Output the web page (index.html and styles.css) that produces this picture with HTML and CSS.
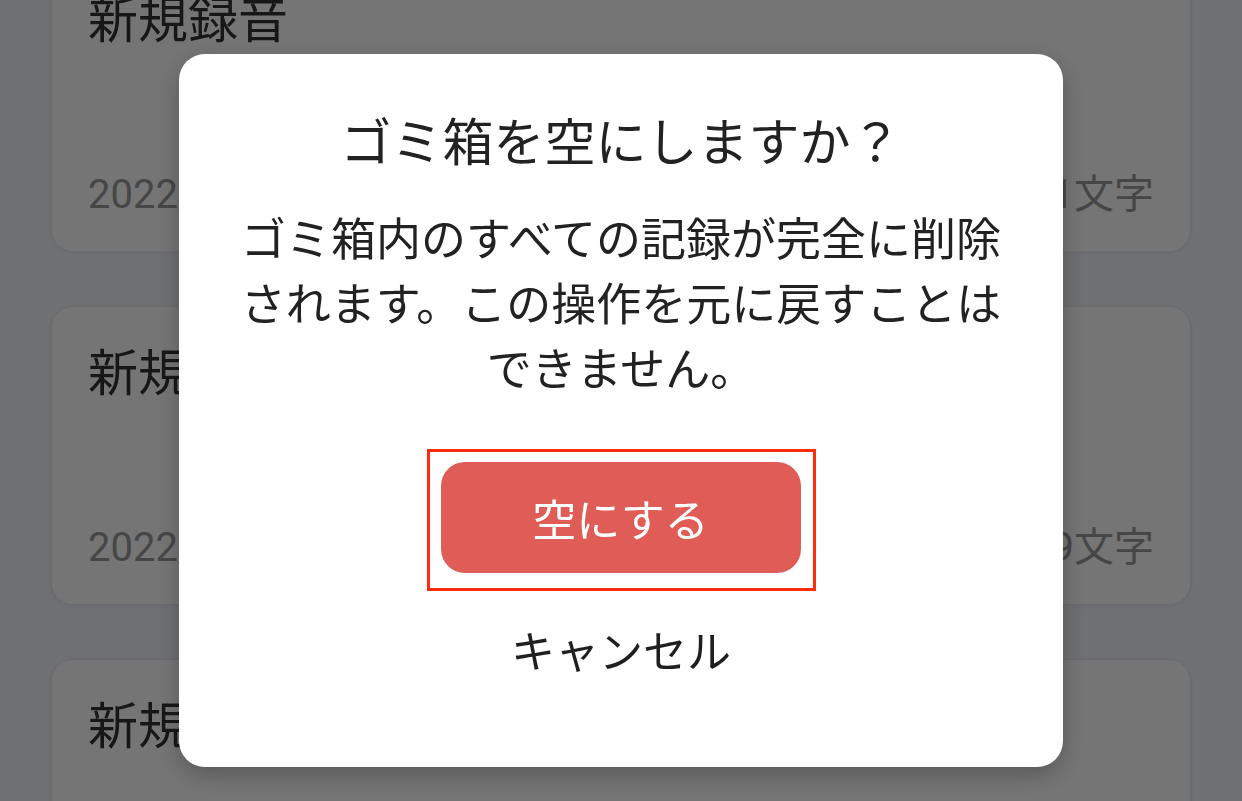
FILE: index.html
```html
<!DOCTYPE html>
<html lang="ja">
<head>
    <meta charset="UTF-8">
    <title>ゴミ箱</title>
    <meta name="viewport" content="width=device-width, initial-scale=1">
    <link rel="stylesheet" href="styles.css">
</head>
<body>
<div class="list">
    <div class="card">
        <div class="card-title">新規録音</div>
        <div class="card-meta"><span>2022/10/12 14:32</span><span>11文字</span></div>
    </div>
    <div class="card">
        <div class="card-title">新規録音</div>
        <div class="card-meta"><span>2022/10/11 09:15</span><span>29文字</span></div>
    </div>
    <div class="card">
        <div class="card-title">新規録音</div>
        <div class="card-meta"><span>2022/10/10 18:04</span><span>5文字</span></div>
    </div>
</div>

<div class="overlay">
    <div class="dialog">
        <h2 class="dialog-title">ゴミ箱を空にしますか？</h2>
        <p class="dialog-text">ゴミ箱内のすべての記録が完全に削除されます。この操作を元に戻すことはできません。</p>
        <div class="highlight">
            <button class="btn-danger">空にする</button>
        </div>
        <button class="btn-cancel">キャンセル</button>
    </div>
</div>
</body>
</html>
```

FILE: styles.css
```css
html, body { height: 801px; overflow: hidden; }
body { margin: 0; background: #f1f3f8; font-family: Roboto, "Noto Sans CJK JP", sans-serif; }
.list { display: flex; flex-direction: column; gap: 54px; padding: 0 51px; margin-top: -47px; }
.card { height: 299px; box-sizing: border-box; background: #fff; border: 1px solid #e8eaef; border-radius: 22px; padding: 32px 36px 28px 36px; display: flex; flex-direction: column; box-shadow: 0 1px 4px rgba(0,0,0,0.05); }
.card-title { font-size: 50px; line-height: 70px; color: #333; }
.card-meta { margin-top: auto; display: flex; justify-content: space-between; font-size: 40px; line-height: 56px; color: #999; }

.overlay { position: fixed; inset: 0; background: rgba(0,0,0,0.54); display: flex; justify-content: center; align-items: flex-start; padding-top: 54px; }
.dialog { width: 884px; box-sizing: border-box; background: #fff; border-radius: 26px; padding: 55px 56px 82px; display: flex; flex-direction: column; align-items: center; box-shadow: 0 8px 24px rgba(0,0,0,0.25); }
.dialog-title { margin: 0; font-size: 51px; line-height: 70px; font-weight: 400; color: #222; text-align: center; }
.dialog-text { margin: 29px 0 0; font-size: 45px; line-height: 65px; color: #222; text-align: center; }
.highlight { margin-top: 46px; border: 3px solid #ff2d0f; padding: 10px 12px 15px 11px; }
.btn-danger { display: block; width: 360px; height: 111px; border: none; border-radius: 24px; background: #e05c56; color: #fff; font-family: inherit; font-size: 44px; cursor: pointer; }
.btn-cancel { margin-top: 30px; border: none; background: none; padding: 0; font-family: inherit; font-size: 44px; line-height: 64px; color: #1f1f1f; cursor: pointer; }
```
